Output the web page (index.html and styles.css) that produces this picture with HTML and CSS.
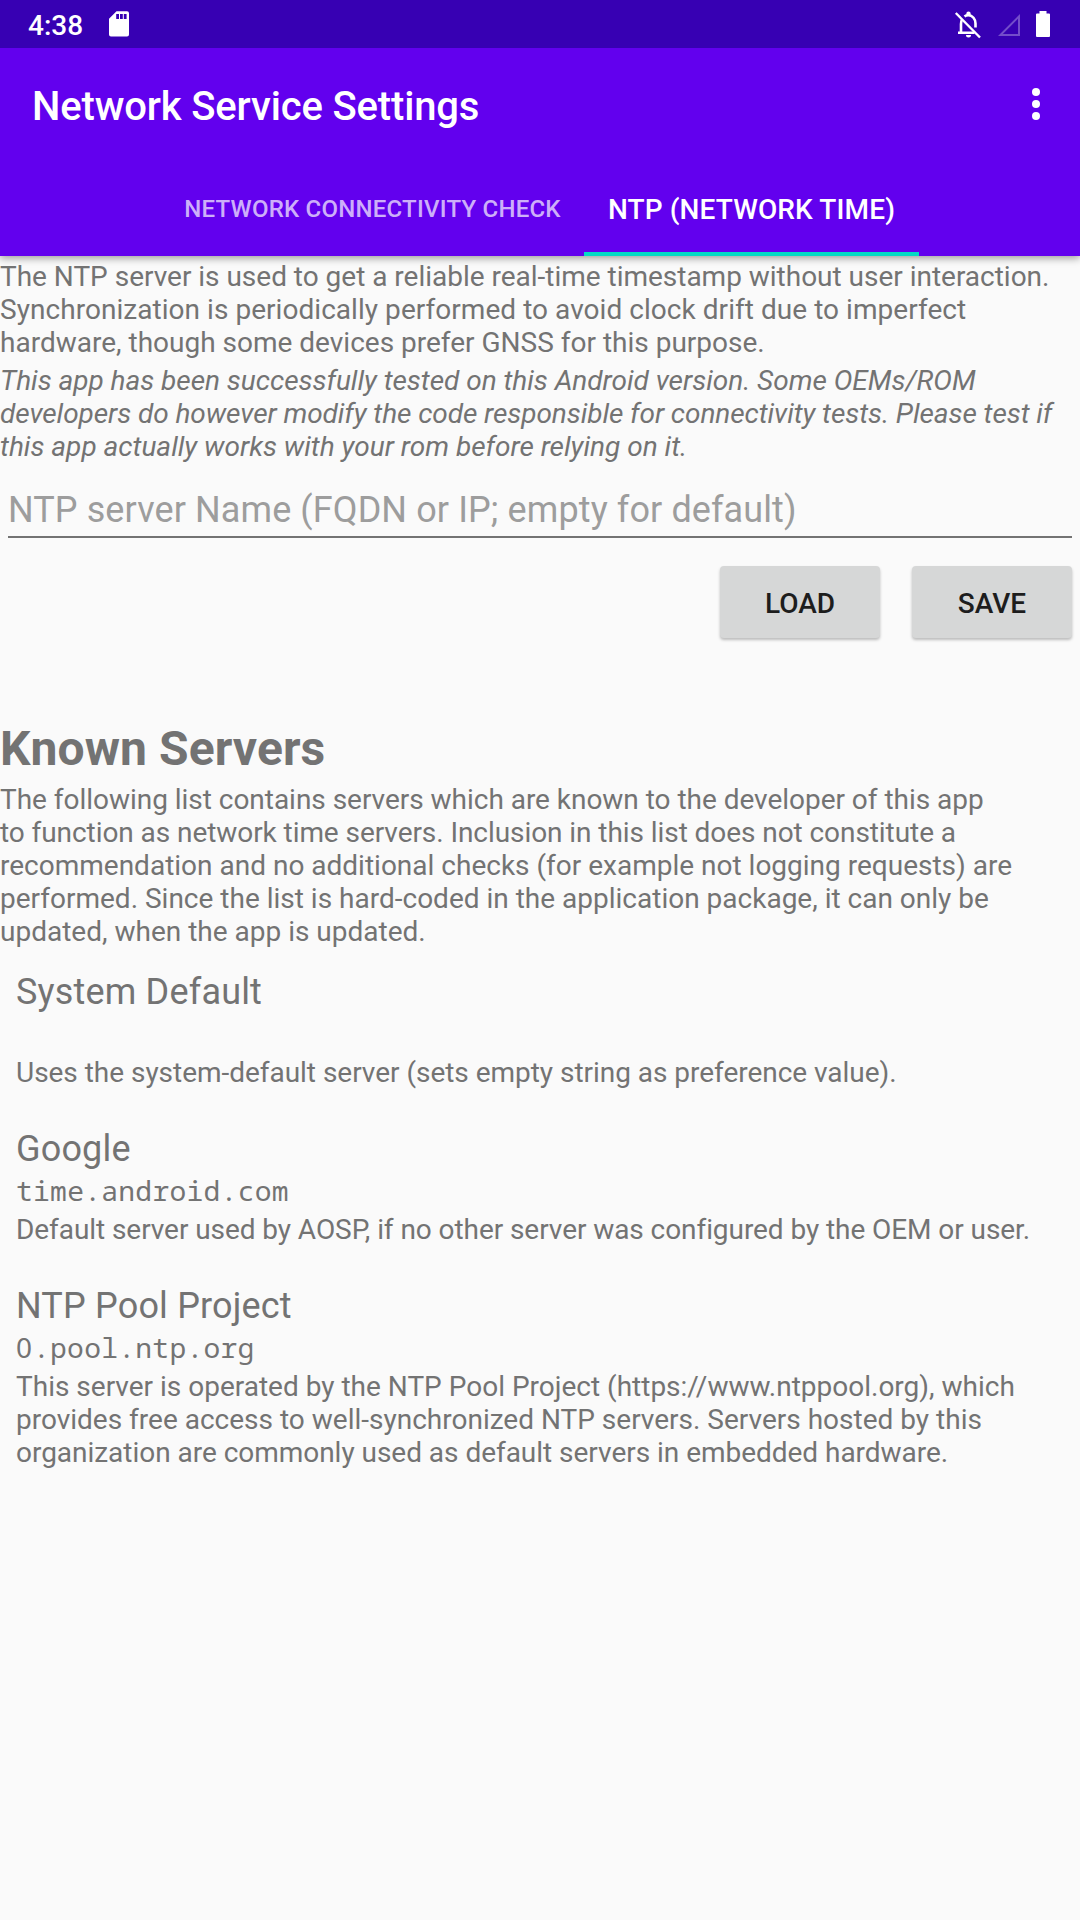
FILE: index.html
```html
<!DOCTYPE html>
<html lang="en">
<head>
<meta charset="utf-8">
<title>Network Service Settings</title>
<link rel="stylesheet" href="styles.css">
</head>
<body>
<header class="header">
  <div class="status-bar">
    <span class="clock">4:38</span>
    <svg class="icon-sd" width="20" height="26" viewBox="0 0 20 26"><path fill="#fff" fill-rule="evenodd" d="M7.5.3H18a2 2 0 0 1 2 2V23.500a2 2 0 0 1-2 2H2a2 2 0 0 1-2-2V7.800zM7.200 3v5h2.800V3zM11 3v5h2.800V3zM14.800 3v5h2.800V3z"/></svg>
    <span class="spacer"></span>
    <svg class="icon-bell" width="28" height="28" viewBox="0 0 28 28" fill="none" stroke="#fff" stroke-width="2.600">
      <path d="M8 8.500C7.200 10 7 11.500 7 13V21.700M4 21.700H20.500M10.500 5.400C11.500 4.600 12.800 4.300 14.500 4.300C18.500 4.300 21.500 8 21.500 12.500V16.500"/>
      <path stroke-width="2.400" d="M1.800 2L26 26.500"/>
      <path fill="#fff" stroke="none" d="M12.300 4V2.800a2.200 2.200 0 0 1 4.400 0V4zM12 24h5a2.500 2.500 0 0 1-5 0z"/>
    </svg>
    <svg class="icon-signal" width="22" height="22" viewBox="0 0 22 22"><path fill="none" stroke="#fff" stroke-opacity=".3" stroke-width="2" d="M2.400 21H21V2.400z"/></svg>
    <svg class="icon-battery" width="14" height="26" viewBox="0 0 14 26"><path fill="#fff" d="M3.500 0h7v2.500H13a1 1 0 0 1 1 1V25a1 1 0 0 1-1 1H1a1 1 0 0 1-1-1V3.500a1 1 0 0 1 1-1h2.500z"/></svg>
  </div>
  <div class="app-bar">
    <h1 class="title">Network Service Settings</h1>
    <svg width="8" height="32" viewBox="0 0 8 32" fill="#fff"><circle cx="4" cy="4" r="4"/><circle cx="4" cy="16" r="4"/><circle cx="4" cy="28" r="4"/></svg>
  </div>
  <nav class="tabs">
    <div class="tab"><span class="tab-label">NETWORK CONNECTIVITY CHECK</span></div>
    <div class="tab tab-active"><span class="tab-label">NTP (NETWORK TIME)</span></div>
  </nav>
</header>
<main class="content">
  <p class="text"><span class="slight">The NTP server is used to get a reliable real-time timestamp without user interaction.</span><br><span class="loose">Synchronization is periodically performed to avoid clock drift due to imperfect</span><br>hardware, though some devices prefer GNSS for this purpose.</p>
  <p class="text notice"><span class="snug">This app has been successfully tested on this Android version. Some OEMs/ROM</span><br><span class="tight">developers do however modify the code responsible for connectivity tests. Please test if</span><br>this app actually works with your rom before relying on it.</p>
  <div class="field">NTP server Name (FQDN or IP; empty for default)</div>
  <div class="actions">
    <button class="button">LOAD</button>
    <button class="button">SAVE</button>
  </div>
  <h2 class="heading">Known Servers</h2>
  <p class="text"><span class="snug">The following list contains servers which are known to the developer of this app</span><br><span class="tight">to function as network time servers. Inclusion in this list does not constitute a</span><br>recommendation and no additional checks (for example not logging requests) are<br>performed. Since the list is hard-coded in the application package, it can only be<br>updated, when the app is updated.</p>
  <ul class="servers">
    <li class="server">
      <h3 class="name">System Default</h3>
      <div class="host"></div>
      <p class="text"><span class="snug">Uses the system-default server (sets empty string as preference value).</span></p>
    </li>
    <li class="server">
      <h3 class="name">Google</h3>
      <div class="host">time.android.com</div>
      <p class="text"><span class="tight">Default server used by AOSP, if no other server was configured by the OEM or user.</span></p>
    </li>
    <li class="server">
      <h3 class="name">NTP Pool Project</h3>
      <div class="host"><span class="zero">0</span>.pool.ntp.org</div>
      <p class="text">This server is operated by the NTP Pool Project (https://www.ntppool.org), which<br>provides free access to well-synchronized NTP servers. Servers hosted by this<br><span class="snug">organization are commonly used as default servers in embedded hardware.</span></p>
    </li>
  </ul>
</main>
</body>
</html>
```
FILE: styles.css
```css
* {
  box-sizing: border-box;
  margin: 0;
  padding: 0;
}

body {
  min-height: 1920px;
  background: #fafafa;
  color: #737373;
  font-family: Roboto, sans-serif;
  font-size: 28px;
  line-height: 33px;
}

.header {
  height: 256px;
  background: #6200ee;
  color: #fff;
  box-shadow: 0 2px 8px rgba(0, 0, 0, 0.4);
}

.status-bar {
  display: flex;
  align-items: flex-start;
  height: 48px;
  padding: 0 30px 0 28px;
  background: #3700b3;
}

.clock {
  width: 81px;
  padding-top: 9px;
  font-weight: 500;
}

.spacer {
  flex: 1;
}

.icon-sd,
.icon-bell,
.icon-battery {
  margin-top: 11px;
}

.icon-signal {
  margin: 14px 16px 0;
}

.app-bar {
  display: flex;
  align-items: center;
  justify-content: space-between;
  height: 112px;
  padding: 0 40px 0 32px;
}

.title {
  padding-top: 6px;
  font-size: 40px;
  font-weight: 500;
  letter-spacing: -0.15px;
  line-height: 48px;
  white-space: nowrap;
}

.tabs {
  display: flex;
  justify-content: center;
  height: 96px;
}

.tab {
  display: flex;
  align-items: center;
  justify-content: center;
  width: 423px;
  padding-top: 2px;
  color: rgba(255, 255, 255, 0.7);
  font-size: 24px;
  font-weight: 500;
  letter-spacing: 0.23px;
  white-space: nowrap;
}

.tab-active {
  width: 335px;
  padding-top: 6px;
  border-bottom: 4px solid #03dac5;
  color: #fff;
  font-size: 28px;
  letter-spacing: 0.12px;
}

.content {
  padding-top: 4px;
}

.text {
  white-space: nowrap;
}

.loose {
  letter-spacing: 0.045px;
}

.slight {
  letter-spacing: -0.015px;
}

.snug {
  letter-spacing: -0.03px;
}

.tight {
  letter-spacing: -0.07px;
}

.notice {
  margin-top: 5px;
  font-style: italic;
}

.field {
  height: 75px;
  margin: 0 8px;
  padding-top: 26px;
  border-bottom: 2px solid #737373;
  color: #9d9d9d;
  font-size: 36px;
  letter-spacing: 0.1px;
  line-height: 42px;
}

.actions {
  display: flex;
  justify-content: flex-end;
  gap: 32px;
  padding: 28px 8px 0;
}

.button {
  width: 160px;
  height: 72px;
  padding-top: 2px;
  border: 0;
  border-radius: 4px;
  background: #d6d7d7;
  box-shadow: 0 2px 3px rgba(0, 0, 0, 0.25);
  color: #1d1d1d;
  font: 500 28px/33px Roboto, sans-serif;
}

.heading {
  margin: 83px 0 6px;
  font-size: 48px;
  font-weight: 700;
  letter-spacing: 0.1px;
  line-height: 56px;
}

.servers {
  display: grid;
  gap: 38px;
  padding: 22px 16px 0;
  list-style: none;
}

.name {
  padding-top: 1px;
  font-size: 36px;
  font-weight: 400;
  letter-spacing: 0.18px;
  line-height: 42px;
}

.host {
  height: 33px;
  margin: 4px 0 6px;
  font-family: "Droid Sans Mono", "Noto Sans Mono", "Liberation Mono", monospace;
  letter-spacing: 0.25px;
}

.zero {
  display: inline-block;
  width: 17px;
  font-family: "Noto Sans", sans-serif;
  line-height: 1;
}
```
